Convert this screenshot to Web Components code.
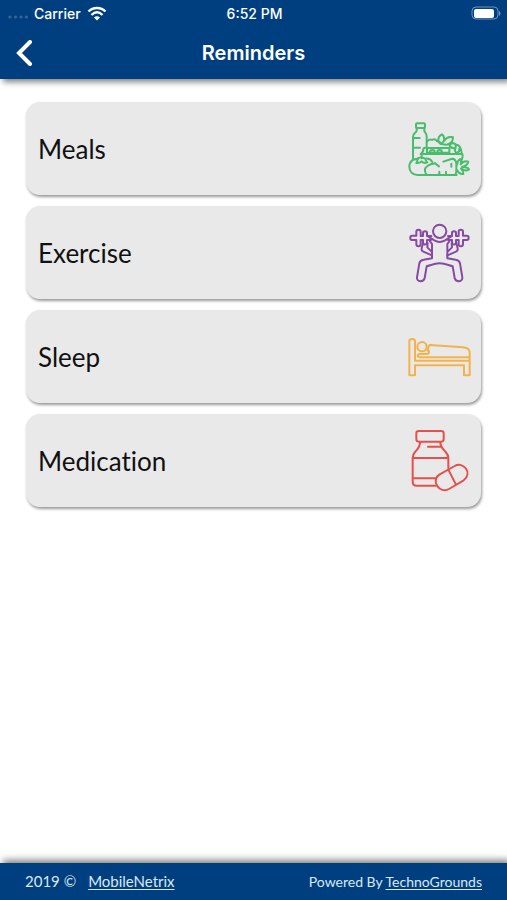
<!DOCTYPE html>
<html lang="en">
<head>
<meta charset="utf-8">
<meta name="viewport" content="width=device-width, initial-scale=1">
<title>Reminders</title>
<style>
    body {
        margin: 0;
        background: #fff;
        font-family: Lato, sans-serif;
        font-variant-ligatures: none;
    }
</style>
</head>
<body>
<reminders-app>
    <status-bar slot="header" carrier="Carrier" time="6:52 PM"></status-bar>
    <nav-bar slot="header">Reminders</nav-bar>
    <reminder-card icon="meals">Meals</reminder-card>
    <reminder-card icon="exercise">Exercise</reminder-card>
    <reminder-card icon="sleep">Sleep</reminder-card>
    <reminder-card icon="medication">Medication</reminder-card>
    <app-footer slot="footer"></app-footer>
</reminders-app>

<script>
const ICONS = {
    meals: {
        color: '#48bd6b',
        shapes: `
            <rect x="48" y="34" width="27" height="14" rx="3"/>
            <path d="M50 48v8c0 5-11 8-11 18v67M73 48v8c0 5 7 8 7 16v32M40 78h19M40 107h20"/>
            <path d="M62 126h125M62 126c5-3 8-8 8-14 0-3 2-5 6-5M187 126c3 8-1 16-4 22M66 127c-2 4-2 8-1 12"/>
            <path d="M81 122v-14h67v14zM90 121c0-9 14-9 14 0M112 121c0-9 14-9 14 0"/>
            <path d="M82 88c4-5 9-7 14-4 7-4 13-2 15 4 6-1 9 2 11 7"/>
            <path d="M115 86c-1-8 3-15 11-19 7 6 8 13 5 21l-7 8c-5-1-8-5-9-10zM134 85c5-9 13-12 25-9 0 12-7 20-19 22l-12-1M148 99c6-7 13-7 19-2v11c-8 2-15 0-19-9zM166 98c9-1 17 7 19 25M167 108c-4 5-3 11 3 15 6-2 9-7 8-13"/>
            <path d="M54 142c-14-3-26 6-26 22 0 14 10 25 24 25h118M50 141c6-5 16-6 25-1 10-2 18 3 22 10M52 142c1 6 0 8-3 11 8 1 12-1 16-5 4 5 10 6 17 3-5-3-6-6-6-11"/>
            <path d="M81 189c-8-8-9-20 1-27 8-6 15-7 24-8M130 149l24-8c9-2 15 5 15 14v17c0 9 0 16-5 17M104 153l13 10M118 189v-10M138 189v-10M154 164v-9"/>
            <path d="M171 158c0-7 3-12 9-17 5 4 5 9 2 16 6-8 14-11 23-8-2 8-9 13-19 16 10 0 18 1 21 7-7 5-16 4-24-2 5 5 8 10 7 16-8 1-15-4-19-12"/>
        `
    },
    exercise: {
        color: '#864aa4',
        shapes: `
            <circle cx="119" cy="46" r="20"/>
            <path d="M94 60H81v-9c0-7-12-7-12 0v9h-7V47c0-8-13-8-13 0v12H36c-7 0-7 13 0 13h13v13c0 8 13 8 13 0V72h7v8c0 7 12 7 12 0v-8h12"/>
            <path d="M144 60h12v-9c0-7 12-7 12 0v9h8V47c0-8 13-8 13 0v12h11c8 0 8 13 0 13h-11v13c0 8-13 8-13 0V72h-8v8c0 7-12 7-12 0v-8h-12"/>
            <path d="M84 61l19 12c10 6 22 6 32 0l19-12"/>
            <path d="M69 82l-4 15c-1 5 1 8 5 10l26 11V84l-6-8M83 82l-1 12 12 12M169 82l4 15c1 5-1 8-5 10l-26 11V84l6-8M155 82l1 12-12 12"/>
            <path d="M96 118v9l-25 4c-9 1-12 5-13 11l-7 42c-2 15 20 15 23 2l6-35c14-4 24-9 39-9s25 5 39 9l6 35c3 13 25 13 23-2l-7-42c-1-6-4-10-13-11l-25-4v-9"/>
        `
    },
    sleep: {
        color: '#f4b24b',
        shapes: `
            <path d="M28 166V64c0-9 17-9 17 0v58h164v44h-17v-30H45v30z"/>
            <circle cx="66" cy="80" r="14"/>
            <path d="M83 92c3-11 1-17 8-17l97 7c14 1 21 7 21 16v23M84 91c6 3 3 10-2 11H59c-7 0-8 10 0 10h150"/>
        `
    },
    medication: {
        color: '#e5504c',
        shapes: `
            <rect x="49" y="21" width="82" height="32" rx="7"/>
            <path d="M60 54c1 15-8 22-15 30-5 6-7 10-7 17v72c0 7 5 12 12 12h57M121 54c-1 15 9 22 16 30 5 6 8 10 8 17v31M84 68h38M38 102h107M40 163h69"/>
            <path d="M118 152l46-26c26-15 55 21 27 43l-44 26c-28 16-56-25-29-43zM145 137l23 45"/>
        `
    }
};

class RemindersApp extends HTMLElement {
    constructor() {
        super();
        this.attachShadow({ mode: 'open' });
        this.shadowRoot.innerHTML = `
            <style>
                :host {
                    display: flex;
                    flex-direction: column;
                    min-height: 100vh;
                }
                header, footer {
                    background: #003f7f;
                    color: #fff;
                }
                header {
                    box-shadow: 3px 3px 6px rgba(0, 0, 0, 0.5);
                }
                footer {
                    box-shadow: 3px -3px 7px rgba(0, 0, 0, 0.5);
                }
                main {
                    flex: 1;
                    display: flex;
                    flex-direction: column;
                    gap: 11px;
                    padding: 23px 26px;
                }
            </style>
            <header><slot name="header"></slot></header>
            <main><slot></slot></main>
            <footer><slot name="footer"></slot></footer>
        `;
    }
}

class StatusBar extends HTMLElement {
    constructor() {
        super();
        this.attachShadow({ mode: 'open' });
        this.shadowRoot.innerHTML = `
            <style>
                :host {
                    display: grid;
                    grid-template-columns: 1fr auto 1fr;
                    align-items: center;
                    height: 26px;
                    padding: 0 6px 0 8px;
                    font: 500 14px Inter, sans-serif;
                }
                .network {
                    display: flex;
                    align-items: center;
                    gap: 6px;
                }
                .dots { fill: #336698; margin-top: 8px; }
                .battery { justify-self: end; }
                svg { display: block; }
            </style>
            <div class="network">
                <svg class="dots" width="20" height="4" viewBox="0 0 20 4">
                    <circle cx="2" cy="2" r="1.6"/><circle cx="7.5" cy="2" r="1.6"/>
                    <circle cx="13" cy="2" r="1.6"/><circle cx="18.4" cy="2" r="1.6"/>
                </svg>
                <span class="carrier"></span>
                <svg width="20" height="15" viewBox="0 0 20 15" fill="none" stroke="#fff" stroke-width="2.4">
                    <path d="M1.5 5.5C6 .8 14 .8 18.500 5.500M4.500 9C8 5.600 12 5.600 15.500 9"/>
                    <path d="M7 11.500c1.800-1.600 4.200-1.600 6 0l-3 3z" fill="#fff" stroke="none"/>
                </svg>
            </div>
            <span class="time"></span>
            <svg class="battery" width="30" height="14" viewBox="0 0 30 14">
                <rect x="1" y="1" width="26" height="12" rx="4" fill="none" stroke="#6f93b9"/>
                <rect x="3" y="3" width="20" height="9" rx="2" fill="#fff"/>
                <path d="M28 5c2 1 2 4 0 5z" fill="#6f93b9"/>
            </svg>
        `;
    }

    connectedCallback() {
        this.shadowRoot.querySelector('.carrier').textContent = this.getAttribute('carrier');
        this.shadowRoot.querySelector('.time').textContent = this.getAttribute('time');
    }
}

class NavBar extends HTMLElement {
    constructor() {
        super();
        this.attachShadow({ mode: 'open' });
        this.shadowRoot.innerHTML = `
            <style>
                :host {
                    display: grid;
                    grid-template-columns: 48px 1fr 48px;
                    align-items: center;
                    height: 53px;
                }
                button {
                    padding: 0 0 0 15px;
                    border: none;
                    background: none;
                    cursor: pointer;
                }
                svg { display: block; }
                h1 {
                    margin: 0;
                    text-align: center;
                    font: 600 20px Inter, sans-serif;
                }
            </style>
            <button type="button" aria-label="Back">
                <svg width="18" height="26" viewBox="0 0 18 26" fill="none" stroke="#fff" stroke-width="4" stroke-linecap="round">
                    <path d="M15 2L4 13l11 11"/>
                </svg>
            </button>
            <h1><slot></slot></h1>
        `;
        this.shadowRoot.querySelector('button').addEventListener('click', () => history.back());
    }
}

class ReminderCard extends HTMLElement {
    constructor() {
        super();
        this.attachShadow({ mode: 'open' });
        this.shadowRoot.innerHTML = `
            <style>
                :host { display: block; }
                button {
                    display: flex;
                    align-items: center;
                    justify-content: space-between;
                    width: 100%;
                    min-height: 93px;
                    padding: 0 9px 0 12px;
                    border: none;
                    border-radius: 14px;
                    background: #e9e9e9;
                    box-shadow: 1px 2px 3px rgba(0, 0, 0, 0.4);
                    color: #111;
                    font: 400 26px Lato, sans-serif;
                    font-variant-ligatures: none;
                    text-align: left;
                    cursor: pointer;
                }
                svg {
                    display: block;
                    fill: none;
                    stroke-width: 6;
                    stroke-linejoin: round;
                    stroke-linecap: round;
                }
            </style>
            <button type="button">
                <span><slot></slot></span>
                <svg width="64" height="63" viewBox="24 15 192 189" aria-hidden="true"></svg>
            </button>
        `;
    }

    connectedCallback() {
        const icon = ICONS[this.getAttribute('icon')];
        const svg = this.shadowRoot.querySelector('svg');
        svg.setAttribute('stroke', icon.color);
        svg.innerHTML = icon.shapes;
    }
}

class AppFooter extends HTMLElement {
    constructor() {
        super();
        this.attachShadow({ mode: 'open' });
        this.shadowRoot.innerHTML = `
            <style>
                :host {
                    display: flex;
                    align-items: center;
                    justify-content: space-between;
                    height: 36px;
                    padding: 0 25px 1px;
                    color: #dbe8f5;
                    font-size: 14px;
                }
                .owner {
                    display: flex;
                    gap: 12px;
                    font-size: 15px;
                }
                a {
                    color: inherit;
                    text-underline-offset: 2px;
                }
            </style>
            <div class="owner"><span>2019 ©</span><a href="#">MobileNetrix</a></div>
            <div>Powered By <a href="#">TechnoGrounds</a></div>
        `;
    }
}

customElements.define('reminders-app', RemindersApp);
customElements.define('status-bar', StatusBar);
customElements.define('nav-bar', NavBar);
customElements.define('reminder-card', ReminderCard);
customElements.define('app-footer', AppFooter);
</script>
</body>
</html>
